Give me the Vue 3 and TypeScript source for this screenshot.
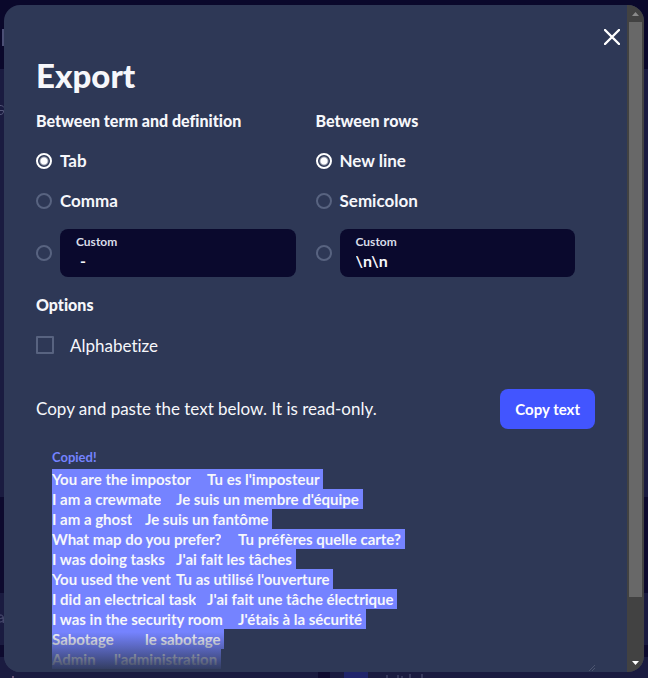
<script setup lang="ts">
import { nextTick, onMounted, ref } from 'vue'

interface Separator {
  value: string
  label: string
}

interface Group {
  name: string
  title: string
  choices: Separator[]
}

const groups: Group[] = [
  {
    name: 'word',
    title: 'Between term and definition',
    choices: [
      { value: 'tab', label: 'Tab' },
      { value: 'comma', label: 'Comma' },
    ],
  },
  {
    name: 'row',
    title: 'Between rows',
    choices: [
      { value: 'newline', label: 'New line' },
      { value: 'semicolon', label: 'Semicolon' },
    ],
  },
]

const selected = ref<Record<string, string>>({ word: 'tab', row: 'newline' })
const custom = ref<Record<string, string>>({ word: ' -', row: '\\n\\n' })
const alphabetize = ref(false)
const output = ref<HTMLTextAreaElement | null>(null)

const cards: [string, string][] = [
  ['You are the impostor', "Tu es l'imposteur"],
  ['I am a crewmate', "Je suis un membre d'équipe"],
  ['I am a ghost', 'Je suis un fantôme'],
  ['What map do you prefer?', 'Tu préfères quelle carte?'],
  ['I was doing tasks', "J'ai fait les tâches"],
  ['You used the vent', "Tu as utilisé l'ouverture"],
  ['I did an electrical task', "J'ai fait une tâche électrique"],
  ['I was in the security room', "J'étais à la sécurité"],
  ['Sabotage', 'le sabotage'],
  ['Admin', "l'administration"],
]
const text = cards.map((c) => c.join('\t')).join('\n') + '\n'

function selectAll() {
  output.value?.focus({ preventScroll: true })
  output.value?.setSelectionRange(0, text.length)
}

onMounted(async () => {
  await nextTick()
  selectAll()
})
</script>

<template>
  <div class="page">
    <div class="backdrop" aria-hidden="true">
      <div class="band top"><span class="mark"></span></div>
      <div class="band upper"><svg viewBox="0 0 4 12" width="4" height="12"><path d="M0 1.500C2 1.500 3 2 4 3.500M0 10.500C3 10.500 3.500 9 3.500 6.500H0" /></svg></div>
      <div class="band dark"></div>
      <div class="band lower"><svg viewBox="0 0 4 9" width="4" height="9"><path d="M0 1C2.500 1 3.200 2 3.200 4V9M3 4C1.500 4 .5 4.500 0 5M3.200 6.500C2.500 7.500 1 8 0 8" /></svg></div>
      <div class="band dark thin"></div>
      <div class="band foot">
        <span class="tick"></span><span class="gap"></span><span class="chip"></span>
        <svg viewBox="0 0 44 4" width="44" height="4"><path d="M3 1V4M14 1V4M18 2V4M26 0V4M38 0V4" /></svg>
      </div>
    </div>

    <section class="modal" role="dialog" aria-labelledby="export-title">
      <div class="body">
        <button class="close" type="button" aria-label="Close">
          <svg viewBox="0 0 16 16" width="16" height="16" fill="none" stroke="currentColor" stroke-width="2.4" stroke-linecap="round">
            <path d="M1 1L15 15M15 1L1 15" />
          </svg>
        </button>

        <h1 id="export-title">Export</h1>

        <div class="groups">
          <fieldset v-for="g in groups" :key="g.name">
            <legend>{{ g.title }}</legend>
            <label v-for="c in g.choices" :key="c.value" class="choice">
              <input v-model="selected[g.name]" type="radio" :name="g.name" :value="c.value" />
              <span>{{ c.label }}</span>
            </label>
            <div class="choice custom">
              <input v-model="selected[g.name]" type="radio" :name="g.name" value="custom" aria-label="Custom" />
              <label class="field">
                <span>Custom</span>
                <input v-model="custom[g.name]" type="text" />
              </label>
            </div>
          </fieldset>
        </div>

        <h2>Options</h2>
        <label class="option">
          <input v-model="alphabetize" type="checkbox" />
          <span>Alphabetize</span>
        </label>

        <div class="copy">
          <p>Copy and paste the text below. It is read-only.</p>
          <button type="button" @click="selectAll">Copy text</button>
        </div>

        <div class="result">
          <label for="export-text">Copied!</label>
          <textarea id="export-text" ref="output" readonly spellcheck="false" :value="text"></textarea>
        </div>
        <div class="fade">
          <svg viewBox="0 0 6 6" width="6" height="6"><path d="M0 6L6 0M3 6L6 3" /></svg>
        </div>
      </div>

      <div class="scrollbar" aria-hidden="true">
        <svg class="arrow dim" viewBox="0 0 17 17" width="17" height="17"><path d="M5 11L8.500 7L12 11Z" /></svg>
        <div class="thumb"></div>
        <svg class="arrow" viewBox="0 0 17 17" width="17" height="17"><path d="M5 6L8.500 10L12 6Z" /></svg>
      </div>
    </section>
  </div>
</template>

<style>
body {
  margin: 0;
  background: #0e0b30;
}
</style>

<style scoped>
.page {
  position: relative;
  box-sizing: border-box;
  height: 100vh;
  padding: 5px 4px 6px;
  overflow: hidden;
  font-family: Lato, "Open Sans", sans-serif;
  font-variant-ligatures: none;
  color: #f6f7fb;
}
.backdrop {
  position: absolute;
  inset: 0;
  display: flex;
  flex-direction: column;
}
.band svg {
  display: block;
  fill: none;
  stroke: #55587a;
}
.top { height: 69px; background: #0a082b; }
.mark {
  display: block;
  width: 2px;
  height: 17px;
  margin: 29px 0 0 2px;
  background: #4b4f75;
}
.upper { flex: 1; background: #1a1b40; }
.upper svg { margin-top: 35px; }
.dark { height: 96px; background: #0d0a2e; }
.lower { height: 52px; background: #1a1b40; }
.lower svg { margin-top: 21px; }
.thin { height: 12px; }
.foot {
  display: flex;
  align-items: flex-end;
  height: 21px;
  background: #1a1b40;
}
.tick { width: 2px; height: 2px; margin-left: 12px; background: #6b5878; }
.gap { width: 12px; height: 6px; margin-left: 304px; background: #0f0b30; }
.chip { width: 24px; height: 6px; margin-left: 14px; background: #20246b; }
.foot svg { margin-left: 16px; }

.modal {
  position: relative;
  display: flex;
  height: 100%;
  overflow: hidden;
  border-radius: 16px;
  background: #2e3856;
}
.body {
  position: relative;
  flex: 1;
  min-width: 0;
  box-sizing: border-box;
  padding: 48px 32px 0;
  overflow: hidden;
}
.close {
  position: absolute;
  top: 20px;
  right: 3px;
  display: grid;
  place-items: center;
  width: 24px;
  height: 24px;
  padding: 0;
  border: 0;
  background: none;
  color: #fff;
}
h1 {
  margin: 0;
  font-size: 33px;
  line-height: 44px;
  font-weight: 900;
}
.groups {
  display: grid;
  grid-template-columns: 1fr 1fr;
  margin-top: 10px;
}
fieldset {
  min-width: 0;
  margin: 0;
  padding: 0 20px 0 0;
  border: 0;
}
legend, h2 {
  margin: 0;
  padding: 0;
  font-size: 16px;
  line-height: 28px;
  font-weight: 900;
}
.choice {
  display: flex;
  align-items: center;
  gap: 8px;
  height: 24px;
  margin-top: 16px;
  font-size: 17px;
  line-height: 24px;
  font-weight: 700;
}
legend + .choice { margin-top: 14px; }
.choice.custom { height: 48px; }
input[type="radio"] {
  appearance: none;
  flex: none;
  width: 16px;
  height: 16px;
  margin: 0;
  border: 2px solid #586380;
  border-radius: 50%;
}
input[type="radio"]:checked {
  border-color: #fff;
  background: radial-gradient(circle, #fff 3px, transparent 5px);
}
.field {
  display: flex;
  flex-direction: column;
  flex: 1;
  min-width: 0;
  box-sizing: border-box;
  height: 48px;
  padding: 4px 16px;
  border-radius: 8px;
  background: #0a092d;
}
.field span {
  font-size: 12px;
  line-height: 18px;
  color: #d9dde8;
}
.field input {
  width: 100%;
  height: 20px;
  padding: 0;
  border: 0;
  outline: 0;
  background: none;
  color: #f6f7fb;
  font: 700 16px/20px Lato, "Open Sans", sans-serif;
}
h2 { margin-top: 14px; }
.option {
  display: flex;
  align-items: center;
  gap: 16px;
  height: 24px;
  margin-top: 14px;
  font-size: 17px;
}
input[type="checkbox"] {
  appearance: none;
  width: 18px;
  height: 18px;
  margin: 0;
  border: 2px solid #586380;
  border-radius: 1px;
}
.copy {
  display: flex;
  align-items: center;
  justify-content: space-between;
  margin-top: 32px;
}
.copy p {
  margin: 0;
  font-size: 17px;
  line-height: 24px;
}
.copy button {
  height: 40px;
  padding: 0 15px;
  border: 0;
  border-radius: 8px;
  background: #4255ff;
  color: #fff;
  font: 700 15px/20px Lato, "Open Sans", sans-serif;
}
.result {
  display: flex;
  flex-direction: column;
  padding: 18px 0 0 16px;
}
.result label {
  font-size: 13px;
  line-height: 20px;
  font-weight: 700;
  color: #7583ff;
}
textarea {
  display: block;
  height: 202px;
  margin: 2px 0 0;
  padding: 0;
  border: 0;
  outline: 0;
  resize: none;
  overflow: hidden;
  background: none;
  color: #f6f7fb;
  font: 700 15px/20px Lato, "Open Sans", sans-serif;
  font-variant-ligatures: none;
  white-space: pre;
  tab-size: 31px;
}
textarea::selection {
  background: #7583ff;
  color: #f6f7fb;
}
.fade {
  position: absolute;
  right: 0;
  bottom: 0;
  left: 0;
  display: flex;
  align-items: flex-end;
  justify-content: flex-end;
  box-sizing: border-box;
  height: 40px;
  padding: 0 32px 1px;
  background: linear-gradient(transparent, #2e3856);
  pointer-events: none;
}
.fade svg { fill: none; stroke: #4c5570; }
.scrollbar {
  display: flex;
  flex-direction: column;
  justify-content: space-between;
  width: 17px;
  background: #424242;
}
.arrow { display: block; fill: #fff; }
.arrow.dim { fill: #8a8a8a; }
.thumb {
  height: 575px;
  margin: 0 2px auto;
  background: #686868;
}
</style>
